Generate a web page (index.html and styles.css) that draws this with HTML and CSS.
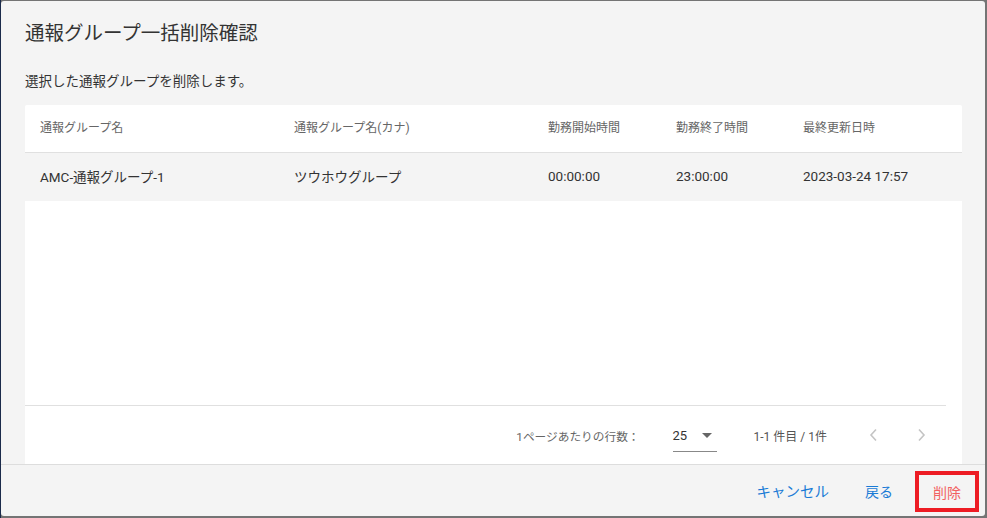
FILE: index.html
```html
<!DOCTYPE html>
<html lang="ja">
<head>
    <meta charset="UTF-8">
    <title>通報グループ一括削除確認</title>
    <link rel="stylesheet" href="styles.css">
</head>
<body>
    <div class="dialog">
        <h2 class="dialog-title">通報グループ一括削除確認</h2>
        <div class="dialog-content">
            <p class="message">選択した通報グループを削除します。</p>
            <div class="card">
                <div class="row head">
                    <div>通報グループ名</div>
                    <div>通報グループ名(カナ)</div>
                    <div>勤務開始時間</div>
                    <div>勤務終了時間</div>
                    <div>最終更新日時</div>
                </div>
                <div class="row item">
                    <div>AMC-通報グループ-1</div>
                    <div>ツウホウグループ</div>
                    <div>00:00:00</div>
                    <div>23:00:00</div>
                    <div>2023-03-24 17:57</div>
                </div>
                <div class="spacer"></div>
                <div class="paginator">
                    <span class="page-label">1ページあたりの行数：</span>
                    <div class="page-select">
                        <span>25</span>
                        <span class="caret"></span>
                    </div>
                    <span class="page-range">1-1 件目 / 1件</span>
                    <button class="nav-btn">
                        <svg width="10" height="14" viewBox="0 0 10 14"><polyline points="7,1.5 2,7 7,12.5" fill="none" stroke="#c4c4c4" stroke-width="1.6"/></svg>
                    </button>
                    <button class="nav-btn">
                        <svg width="10" height="14" viewBox="0 0 10 14"><polyline points="3,1.5 8,7 3,12.5" fill="none" stroke="#c4c4c4" stroke-width="1.6"/></svg>
                    </button>
                </div>
            </div>
        </div>
        <div class="dialog-actions">
            <button class="btn btn-cancel">キャンセル</button>
            <button class="btn btn-back">戻る</button>
            <button class="btn btn-delete">削除</button>
        </div>
    </div>
</body>
</html>
```

FILE: styles.css
```css
html, body {
    margin: 0;
    height: 100%;
}

body {
    font-family: Roboto, "Noto Sans CJK JP", sans-serif;
    background-color: #747474;
    border-left: 1px solid #1b2b4b;
    padding: 1px 2px 2px 0;
    box-sizing: border-box;
    overflow: hidden;
}

.dialog {
    width: 984px;
    height: 515px;
    background-color: #f4f4f4;
    border-radius: 3px;
    display: flex;
    flex-direction: column;
    box-sizing: border-box;
}

.dialog-title {
    margin: 0;
    padding: 21px 24px 0;
    font-size: 19.5px;
    font-weight: 400;
    line-height: 24px;
    color: #333;
}

.dialog-content {
    flex: 1;
    display: flex;
    flex-direction: column;
    padding: 0 23px 0 24px;
}

.message {
    margin: 25px 0 14px;
    font-size: 13.5px;
    line-height: 20px;
    color: #333;
}

.card {
    flex: 1;
    background-color: #fff;
    border-radius: 2px 2px 0 0;
    display: flex;
    flex-direction: column;
}

.row {
    display: grid;
    grid-template-columns: 254px 254px 128px 127px 1fr;
    padding-left: 15px;
    align-items: center;
}

.row.head {
    height: 43px;
    padding-bottom: 4px;
    border-bottom: 1px solid #e0e0e0;
    font-size: 12px;
    color: #666;
}

.row.item {
    height: 45px;
    padding-bottom: 3px;
    background-color: #f4f4f4;
    font-size: 13.5px;
    color: #333;
}

.spacer {
    flex: 1;
}

.paginator {
    height: 58px;
    margin-right: 16px;
    border-top: 1px solid #e0e0e0;
    display: flex;
    align-items: center;
    justify-content: flex-end;
    font-size: 12px;
    color: #666;
}

.page-label {
    margin-right: 33px;
    font-size: 11.7px;
}

.page-select {
    width: 44px;
    height: 31px;
    margin-top: 2px;
    border-bottom: 1px solid #888;
    display: flex;
    align-items: center;
    justify-content: space-between;
    box-sizing: border-box;
    font-size: 13px;
    color: #333;
}

.caret {
    width: 0;
    height: 0;
    margin-right: 5px;
    border-left: 5px solid transparent;
    border-right: 5px solid transparent;
    border-top: 5px solid #666;
}

.page-range {
    margin-left: 37px;
    color: #555;
}

.nav-btn {
    width: 40px;
    height: 40px;
    border: none;
    background: none;
    padding: 0;
    display: flex;
    align-items: center;
    justify-content: center;
}

.nav-btn:first-of-type {
    margin-left: 27px;
}

.nav-btn:last-of-type {
    margin-left: 7px;
    margin-right: 5px;
}

.dialog-actions {
    height: 51px;
    border-top: 1px solid #ddd;
    display: flex;
    align-items: center;
    justify-content: flex-end;
    padding-right: 6px;
}

.btn {
    font-family: Roboto, "Noto Sans CJK JP", sans-serif;
    font-size: 14px;
    background: none;
    border: none;
    height: 36px;
    padding: 0 8px;
    cursor: pointer;
    color: #1a7bd6;
}

.btn-cancel {
    font-size: 14.5px;
    margin-right: 20px;
}

.btn-back {
    margin-right: 14px;
}

.btn-delete {
    width: 64px;
    height: 41px;
    border: 4px solid #ed1c24;
    color: #f26262;
    box-sizing: border-box;
    margin-top: 2px;
}
```
